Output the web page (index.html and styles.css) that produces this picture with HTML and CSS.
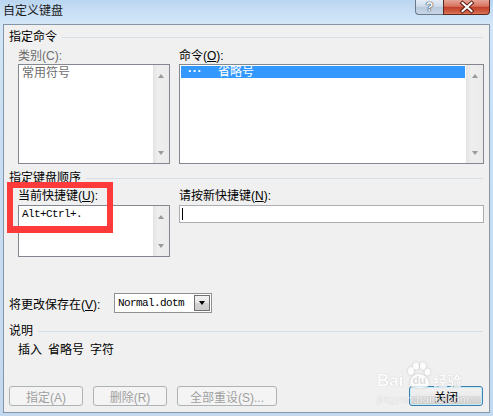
FILE: index.html
```html
<!DOCTYPE html>
<html lang="zh-CN">
<head>
<meta charset="utf-8">
<title>自定义键盘</title>
<link rel="stylesheet" href="styles.css">
</head>
<body>
<div class="window">
  <div class="titlebar">
    <span class="title">自定义键盘</span>
    <div class="caption">
      <div class="cbtn help">?</div>
      <div class="cbtn close">
        <svg width="47" height="14" viewBox="0 0 47 14">
          <path d="M18.5 3 L27.5 11 M27.5 3 L18.5 11" stroke="#5b1d12" stroke-width="4" stroke-linecap="square" fill="none"/>
          <path d="M18.5 3 L27.5 11 M27.5 3 L18.5 11" stroke="#ffffff" stroke-width="2" stroke-linecap="square" fill="none"/>
        </svg>
      </div>
    </div>
  </div>

  <div class="client">
    <div class="ghead g1"><span>指定命令</span><i class="gline"></i></div>
    <div class="cols">
      <div class="col-l">
        <div class="label lbl1 disabled">类别(C):</div>
        <div class="listbox lb-tall">
          <div class="items"><div class="item disabled">常用符号</div></div>
          <div class="vscroll vs-l"><span class="up"></span><span class="down"></span></div>
        </div>
      </div>
      <div class="col-r">
        <div class="label lbl1">命令(<u>O</u>):</div>
        <div class="listbox lb-tall">
          <div class="items items-r">
            <div class="sel"><span class="dots">···</span><span>省略号</span></div>
          </div>
          <div class="vscroll vs-r"><span class="up"></span><span class="down"></span></div>
        </div>
      </div>
    </div>

    <div class="ghead g2"><span>指定键盘顺序</span><i class="gline"></i></div>
    <div class="cols">
      <div class="col-l">
        <div class="label lbl2">当前快捷键(<u>U</u>):</div>
        <div class="listbox lb-short">
          <div class="items"><div class="item mono">Alt+Ctrl+.</div></div>
          <div class="vscroll vs-l vs-short"><span class="up"></span><span class="down"></span></div>
        </div>
      </div>
      <div class="col-r">
        <div class="label lbl2">请按新快捷键(<u>N</u>):</div>
        <div class="input"><span class="caret"></span></div>
      </div>
    </div>

    <div class="saverow">
      <span class="savelbl">将更改保存在(<u>V</u>):</span>
      <div class="select">
        <span class="mono">Normal.dotm</span>
        <span class="ddbtn"><i class="tri"></i></span>
      </div>
    </div>

    <div class="ghead g3"><span>说明</span><i class="gline"></i></div>
    <div class="desc"><span>插入</span><span>省略号</span><span>字符</span></div>

    <div class="btnrow">
      <div class="btn">指定(A)</div>
      <div class="btn">删除(R)</div>
      <div class="btn btn-wide">全部重设(S)...</div>
      <div class="btn btn-close">关闭</div>
    </div>

    <div class="highlight"></div>
  </div>

  <div class="watermark">
    <div class="wm-top">
      <span class="wm-bai">Bai</span>
      <span class="wm-paw">
        <svg width="26" height="27" viewBox="0 0 26 27">
          <ellipse cx="6" cy="9" rx="3" ry="4" fill="#fff"/>
          <ellipse cx="11" cy="4" rx="3" ry="3.8" fill="#fff"/>
          <ellipse cx="18" cy="4" rx="3" ry="3.8" fill="#fff"/>
          <ellipse cx="22.5" cy="10" rx="3" ry="3.6" fill="#fff"/>
          <path d="M5 23 C5 15 10 12 14 12 C19 12 24 16 24 23 C24 27 5 27 5 23 Z" fill="#fff"/>
        </svg>
        <span class="wm-du">du</span>
      </span>
      <span class="wm-jy">经验</span>
    </div>
    <div class="wm-url">jingyan.baidu.com</div>
  </div>
</div>
</body>
</html>
```

FILE: styles.css
```css
* { box-sizing: border-box; }
html, body { margin: 0; padding: 0; }
body {
  width: 493px;
  height: 416px;
  overflow: hidden;
  font-family: "Liberation Sans", "Noto Sans CJK SC", sans-serif;
  font-size: 12px;
  color: #000;
}

.window {
  position: relative;
  width: 493px;
  height: 416px;
  padding: 0 3px 3px;
  display: flex;
  flex-direction: column;
  background: linear-gradient(to bottom, #b9d5ef 0, #c6def5 10px, #d2e6f8 22px, #c9dff3 120px, #c2d9ef 100%);
}

/* title bar */
.titlebar {
  height: 24px;
  flex: none;
  display: flex;
  align-items: flex-start;
}
.title {
  margin-top: 4px;
  line-height: 14px;
  color: #1a1a1a;
}
.caption {
  margin-left: auto;
  display: flex;
}
.cbtn {
  height: 15px;
  border: 1px solid #6b7a8b;
  border-top: none;
}
.help {
  width: 28px;
  border-right: none;
  border-radius: 0 0 0 4px;
  background: linear-gradient(to bottom, #e4edf6 0, #cfdcea 45%, #b8c9dc 50%, #c8d6e6 100%);
  color: #ffffff;
  font-weight: bold;
  font-size: 13px;
  line-height: 14px;
  text-align: center;
  text-shadow: 0 0 1px #2a3a4c, 0 0 1px #2a3a4c, 0 0 1px #2a3a4c;
}
.close {
  width: 47px;
  border-color: #5a2a20;
  border-radius: 0 0 4px 0;
  background: linear-gradient(to bottom, #e6a597 0, #d7735f 45%, #c2412a 52%, #cf5d44 85%, #e07a5c 100%);
}
.close svg { display: block; }

/* client */
.client {
  flex: 1;
  position: relative;
  background: #f0f0f0;
  border: 1px solid #8796a6;
  display: flex;
  flex-direction: column;
}

.ghead {
  display: flex;
  align-items: center;
  height: 14px;
  line-height: 14px;
  padding: 0 6px 0 5px;
  white-space: nowrap;
}
.gline {
  flex: 1;
  height: 1px;
  background: #d5dfe5;
  margin-left: 5px;
}
.g1 { margin-top: 5px; }
.g2 { margin-top: 7px; }
.g3 { margin-top: 11px; }

.cols {
  display: flex;
  gap: 9px;
  padding-left: 14px;
}
.col-l { width: 152px; }
.col-r { width: 305px; }

.label {
  height: 14px;
  line-height: 14px;
  white-space: nowrap;
}
.lbl1 { margin-top: 5px; }
.lbl2 { margin-top: 4px; }
.disabled { color: #6d6d6d; }
u { text-decoration: underline; }

.listbox {
  display: flex;
  border: 1px solid #828790;
  background: #fff;
}
.lb-tall { margin-top: 1px; height: 100px; }
.lb-short { margin-top: 2px; height: 52px; }

.items {
  flex: 1;
  padding-top: 1px;
}
.items-r {
  padding: 1px 1px 0 1px;
}
.item {
  line-height: 14px;
  padding-left: 3px;
  white-space: nowrap;
}
.mono {
  font-family: "Liberation Mono", "DejaVu Sans Mono", monospace;
  font-size: 11px;
  letter-spacing: -0.6px;
}

.sel {
  display: flex;
  align-items: center;
  height: 12px;
  line-height: 12px;
  background: #3399ff;
  color: #fff;
  padding-left: 7px;
  white-space: nowrap;
}
.dots {
  width: 30px;
  font-weight: bold;
  letter-spacing: 0.8px;
  position: relative;
  top: -1px;
}

.vscroll {
  display: flex;
  flex-direction: column;
  justify-content: space-between;
  align-items: center;
  background: linear-gradient(to right, #e3e3e3 0, #eeeeee 30%, #ebebeb 100%);
  padding: 9px 0 8px;
}
.vs-l { width: 16px; }
.vs-r { width: 17px; }
.vs-short { padding: 9px 0 8px; }
.up, .down {
  width: 0;
  height: 0;
  border-left: 3.5px solid transparent;
  border-right: 3.5px solid transparent;
}
.up { border-bottom: 4px solid #9a9a9a; }
.down { border-top: 4px solid #9a9a9a; }

.input {
  margin-top: 2px;
  height: 18px;
  border: 1px solid #abadb3;
  background: #fff;
  padding-left: 2px;
  display: flex;
  align-items: center;
}
.caret {
  width: 1px;
  height: 12px;
  background: #000;
}

.saverow {
  margin-top: 36px;
  height: 20px;
  display: flex;
  align-items: center;
  padding-left: 5px;
}
.savelbl {
  width: 105px;
  white-space: nowrap;
}
.select {
  width: 98px;
  height: 20px;
  border: 1px solid #8e9196;
  background: #fff;
  display: flex;
  align-items: center;
  padding: 0 1px 0 3px;
}
.ddbtn {
  margin-left: auto;
  width: 16px;
  height: 16px;
  border: 1px solid #707070;
  background: linear-gradient(to bottom, #f3f3f3 0, #e4e4e4 50%, #d3d3d3 51%, #cdcdcd 100%);
  display: flex;
  align-items: center;
  justify-content: center;
}
.tri {
  width: 0;
  height: 0;
  border-left: 3.5px solid transparent;
  border-right: 3.5px solid transparent;
  border-top: 4px solid #000;
}

.desc {
  margin-top: 5px;
  line-height: 14px;
  padding-left: 14px;
  display: flex;
  gap: 6px;
}

.btnrow {
  margin-top: 29px;
  height: 20px;
  display: flex;
  gap: 10px;
  padding: 0 6px 0 5px;
}
.btn {
  width: 74px;
  height: 20px;
  border: 1px solid #adb2b5;
  border-radius: 3px;
  background: #f4f4f4;
  color: #a0a0a0;
  display: flex;
  align-items: center;
  justify-content: center;
  white-space: nowrap;
}
.btn-wide { width: 100px; }
.btn-close {
  margin-left: auto;
  color: #000;
  border-color: #3c7fb1;
  background: linear-gradient(to bottom, #f2f2f2 0, #ebebeb 48%, #dddddd 52%, #cfcfcf 100%);
  box-shadow: inset 0 0 0 1px #c5ecfb;
}

.highlight {
  position: absolute;
  left: 3px;
  top: 157px;
  width: 106px;
  height: 51px;
  border: 6px solid #ff3a3a;
  border-bottom-width: 7px;
}

/* watermark overlay */
.watermark {
  position: absolute;
  left: 377px;
  top: 361px;
  width: 90px;
  color: #fff;
  opacity: 0.8;
  pointer-events: none;
}
.wm-top {
  display: flex;
  align-items: flex-end;
  height: 28px;
}
.wm-bai {
  font-family: "Liberation Sans", sans-serif;
  font-weight: bold;
  font-size: 17px;
  line-height: 16px;
  text-shadow: 0 0 1px rgba(120,120,120,0.6);
}
.wm-paw {
  position: relative;
  width: 26px;
  height: 27px;
  margin-left: 2px;
  filter: drop-shadow(0 0 1px rgba(120,120,120,0.5));
}
.wm-paw svg { display: block; }
.wm-du {
  position: absolute;
  left: 7px;
  top: 12px;
  font-weight: bold;
  font-size: 11px;
  line-height: 12px;
  color: #d8d8d8;
}
.wm-jy {
  font-weight: bold;
  font-size: 14px;
  line-height: 16px;
  margin-left: 2px;
  text-shadow: 0 0 1px rgba(120,120,120,0.6);
}
.wm-url {
  margin-top: 4px;
  font-size: 11px;
  line-height: 12px;
  letter-spacing: 0.2px;
  color: #f4f4f4;
  text-shadow: 0 0 1px rgba(120,120,120,0.5);
}
```
